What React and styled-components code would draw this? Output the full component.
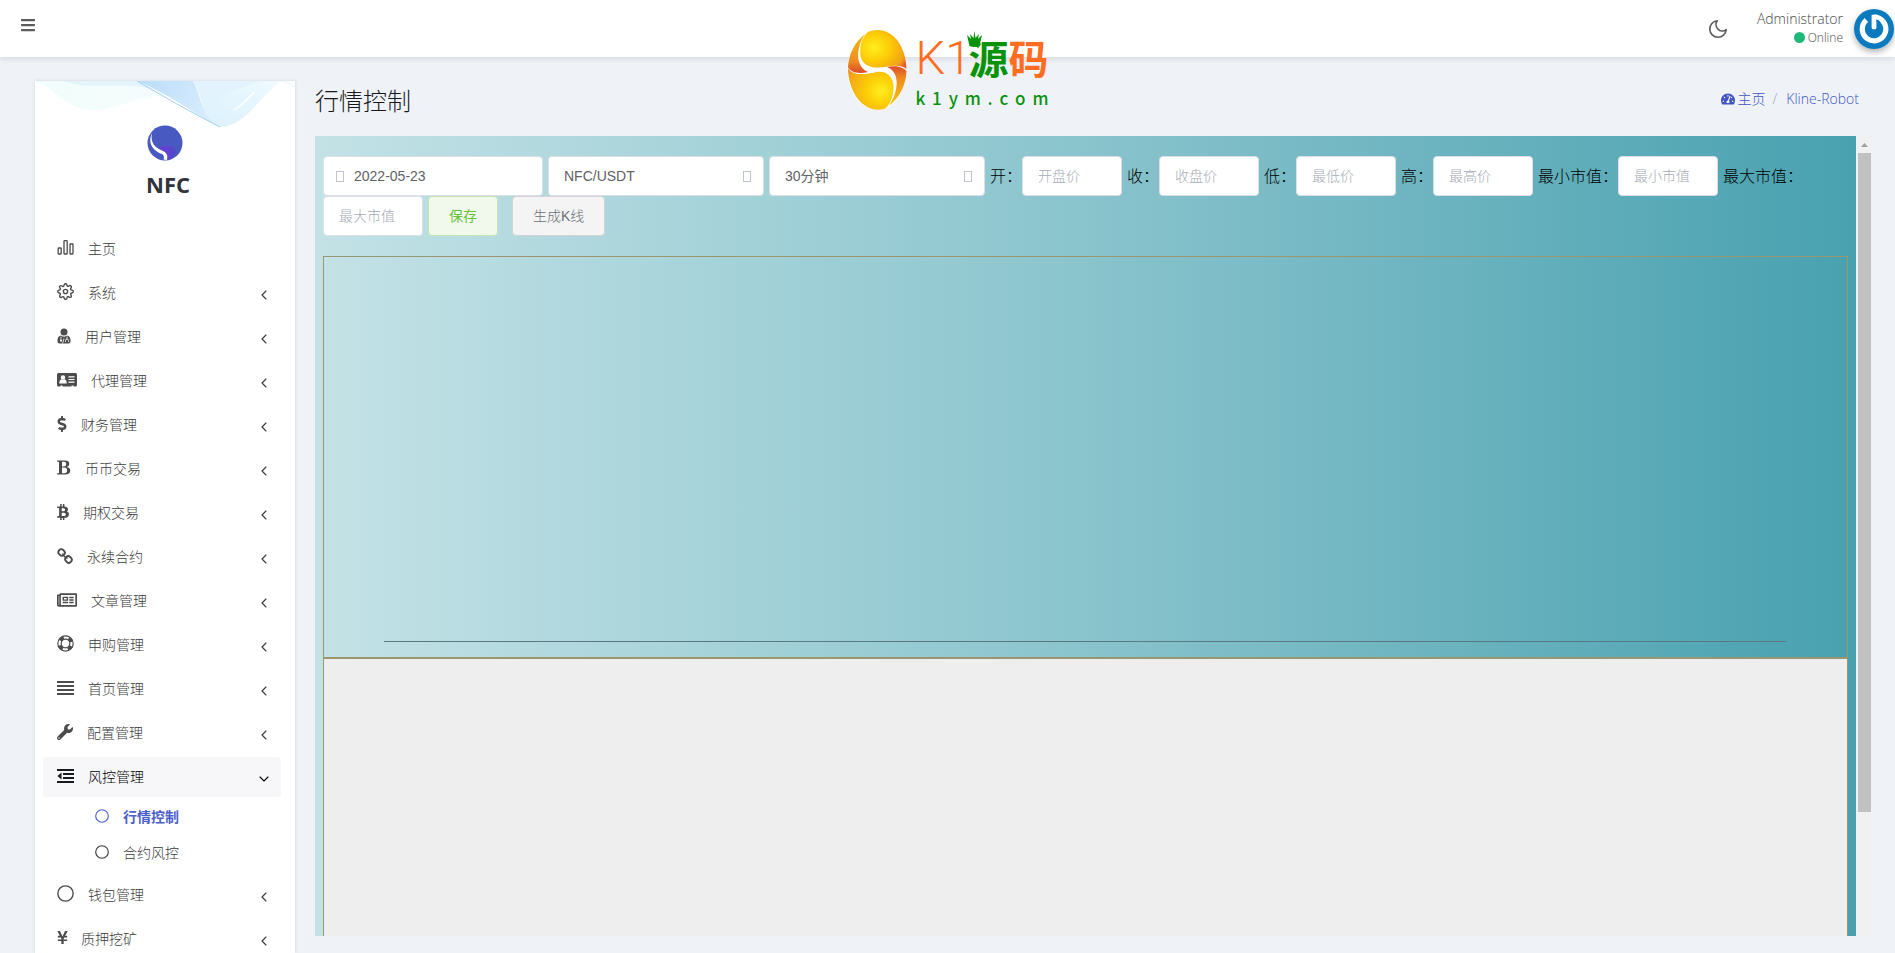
import React from "react";
import styled, { createGlobalStyle, css } from "styled-components";
import { FaBars, FaBtc, FaDollarSign, FaRegNewspaper, FaTachometerAlt, FaWrench, FaYenSign } from "react-icons/fa";
import { FiChevronDown, FiChevronLeft, FiMoon, FiSettings } from "react-icons/fi";

const latin = `"Open Sans", "Noto Sans CJK SC", sans-serif`;
const element = `"Liberation Sans", "Noto Sans CJK SC", sans-serif`;

const GlobalStyle = createGlobalStyle`
  *, *::before, *::after { box-sizing: border-box; }
  body {
    margin: 0;
    background: #eff3f8;
    color: #414750;
    font-family: ${latin};
    font-size: 14px;
    font-weight: 300;
  }
  a { color: inherit; text-decoration: none; }
  button, input, select { font: inherit; color: inherit; }
  ul, ol { margin: 0; padding: 0; list-style: none; }
  svg { display: block; flex: none; }
`;

const Shell = styled.div`
  position: relative;
  height: 100vh;
  display: flex;
  flex-direction: column;
  overflow: hidden;
`;

/* ---------- top bar ---------- */

const TopBar = styled.header`
  flex: none;
  height: 57px;
  display: flex;
  align-items: center;
  justify-content: space-between;
  padding: 0 1px 0 20px;
  background: #fff;
  box-shadow: 0 2px 5px rgba(60, 70, 90, 0.14);
`;

const IconButton = styled.button`
  display: flex;
  padding: 0;
  border: 0;
  background: none;
  color: #5c5c5c;
  cursor: pointer;
`;

const MenuButton = styled(IconButton)`
  margin-bottom: 7px;
`;

const UserArea = styled.div`
  display: flex;
  align-items: center;
`;

const UserText = styled.div`
  display: flex;
  flex-direction: column;
  align-items: flex-end;
  margin: 0 11px 2px 28px;
  color: #4a4a4a;
  font-size: 14px;
  line-height: 20px;
`;

const Status = styled.span`
  display: flex;
  align-items: center;
  gap: 3px;
  font-size: 12px;
  line-height: 18px;

  &::before {
    content: "";
    width: 11px;
    height: 11px;
    border-radius: 50%;
    background: #21b978;
  }
`;

const AvatarFrame = styled.span`
  display: flex;
  border-radius: 50%;
  box-shadow: 0 3px 6px rgba(0, 0, 0, 0.3);
`;

const Avatar = () => (
  <AvatarFrame>
    <svg width="40" height="40" viewBox="0 0 40 40" role="img" aria-label="Administrator">
      <circle cx="20" cy="20" r="20" fill="#0b7abf" />
      <path d="M20 8.200 A11.800 11.800 0 1 1 12.400 11" fill="none" stroke="#fff" strokeWidth="5.200" />
      <path d="M17.600 5.700 H22.400 V18.500 Q22.400 20.500 20 20.500 Q17.600 20.500 17.600 18.500 Z" fill="#fff" />
      <path d="M22.400 10.500 V12 Q25 12.500 27 14 L24.500 11 Z" fill="#0b7abf" />
    </svg>
  </AvatarFrame>
);

/* ---------- watermark ---------- */

const Watermark = styled.div`
  position: absolute;
  top: 29px;
  left: 50%;
  transform: translateX(-50%);
  display: flex;
  gap: 9px;
  pointer-events: none;
`;

const MarkText = styled.div`
  display: flex;
  flex-direction: column;
  width: 133px;
`;

const MarkTitle = styled.div`
  position: relative;
  display: flex;
  align-items: center;
  height: 57px;
  color: #ff6d20;
  font: 700 40px/57px "Noto Sans CJK SC", sans-serif;
`;

const MarkLatin = styled.span`
  width: 53px;
  font: 300 47px/57px Roboto, sans-serif;
`;

const Green = styled.span`
  color: #0a930a;
`;

const Crown = styled.svg`
  position: absolute;
  top: 2px;
  left: 50px;
`;

const MarkDomain = styled.div`
  display: flex;
  justify-content: space-between;
  color: #0a930a;
  font: 500 17px/24px "Noto Sans CJK SC", sans-serif;
`;

const Egg = () => (
  <svg width="60" height="82" viewBox="0 0 60 82" aria-hidden="true">
    <defs>
      <radialGradient id="eggTop" cx="0.3" cy="0.45" r="0.8">
        <stop offset="0" stopColor="#ffee20" />
        <stop offset="0.45" stopColor="#fccb05" />
        <stop offset="0.85" stopColor="#f3a018" />
        <stop offset="1" stopColor="#e0572a" />
      </radialGradient>
      <radialGradient id="eggBottom" cx="0.72" cy="0.55" r="0.85">
        <stop offset="0" stopColor="#ffee20" />
        <stop offset="0.4" stopColor="#fccb05" />
        <stop offset="0.85" stopColor="#f3a81a" />
        <stop offset="1" stopColor="#ee8a1c" />
      </radialGradient>
      <linearGradient id="eggEdge" x1="0" y1="0" x2="0" y2="1">
        <stop offset="0" stopColor="#f9bd12" />
        <stop offset="0.7" stopColor="#ee8c20" />
        <stop offset="1" stopColor="#dc4a2a" />
      </linearGradient>
      <linearGradient id="eggEdgeLow" x1="0" y1="1" x2="0" y2="0">
        <stop offset="0" stopColor="#fbc60c" />
        <stop offset="0.7" stopColor="#ee8c20" />
        <stop offset="1" stopColor="#dc4a2a" />
      </linearGradient>
    </defs>
    <ellipse cx="30" cy="41" rx="29.500" ry="40" fill="#fff" />
    <path d="M30 1 C48 1 59 19 59.500 40 C56 37 49 36 41 37.500 C29 40 16 39 13.500 27 C12 16 16 6 22 2.500 Q26 1 30 1Z" fill="url(#eggTop)" />
    <path d="M18 5 C8 13 2 24 1 38 C4 44 12 45 21 43 C10 38 7 23 18 5Z" fill="url(#eggEdge)" />
    <path d="M1 38.500 C3 46 17 46.500 29 43 C40 41 46 48 46.500 57 C47 68 42 78 37 80 C18 85 1 65 1 38.500Z" fill="url(#eggBottom)" />
    <path d="M42 77 C53 68 59 56 59.500 42 C56 37.500 48 36 40 38 C51 42 54 58 42 77Z" fill="url(#eggEdgeLow)" />
  </svg>
);

const Brandmark = () => (
  <Watermark>
    <Egg />
    <MarkText>
      <MarkTitle>
        <MarkLatin>K1</MarkLatin>
        <Green>源</Green>
        <span>码</span>
        <Crown width="17" height="17" viewBox="0 0 17 17" aria-hidden="true">
          <path d="M1 4 L5 8 L4 3 L7.500 7 L8.500 0 L9.500 7 L13 3 L12 8 L16 4 L13.500 15 Q8.500 17 3.500 15 Z" fill="#0a930a" />
        </Crown>
      </MarkTitle>
      <MarkDomain>
        {[..."k1ym.com"].map((letter, i) => (
          <span key={i}>{letter}</span>
        ))}
      </MarkDomain>
    </MarkText>
  </Watermark>
);

/* ---------- sidebar ---------- */

const Columns = styled.div`
  flex: 1;
  min-height: 0;
  display: flex;
  gap: 20px;
  padding: 24px 22px 0 35px;
`;

const Sidebar = styled.aside`
  flex: none;
  width: 260px;
  overflow: hidden;
  background: #fff;
  box-shadow: 0 0 4px rgba(60, 70, 90, 0.16);
`;

const Brand = styled.a`
  position: relative;
  display: flex;
  flex-direction: column;
  align-items: center;
  height: 148px;
  padding-top: 44px;
  color: #30343b;
  font-size: 22px;
  font-weight: 700;
  line-height: 30px;
`;

const BrandName = styled.span`
  margin: 8px 0 0 6px;
`;

const Waves = styled.svg`
  position: absolute;
  top: 0;
  left: 0;
`;

const BrandWaves = () => (
  <Waves width="260" height="48" viewBox="0 0 260 48" aria-hidden="true">
    <defs>
      <linearGradient id="wBlue" x1="0" y1="0" x2="1" y2="0.4">
        <stop offset="0" stopColor="#b9def8" />
        <stop offset="0.5" stopColor="#c9e4fb" />
        <stop offset="1" stopColor="#d8edfc" />
      </linearGradient>
      <linearGradient id="wMint" x1="0" y1="0" x2="1" y2="0">
        <stop offset="0" stopColor="#f0fdfb" />
        <stop offset="0.6" stopColor="#f4fdfc" />
        <stop offset="1" stopColor="#f4fbfd" />
      </linearGradient>
      <linearGradient id="wPale" x1="0" y1="1" x2="1" y2="0">
        <stop offset="0" stopColor="#d9f0fd" />
        <stop offset="1" stopColor="#effaff" />
      </linearGradient>
    </defs>
    <path d="M0 0 C22 8 30 28 58 29 C84 29 90 18 130 14 L102 0Z" fill="url(#wMint)" />
    <path d="M28 0 C56 10 84 0 118 8 L102 0Z" fill="#e3f5fa" />
    <path d="M102 0 H158 C166 14 166 34 185 46 C160 34 140 16 102 0Z" fill="url(#wBlue)" />
    <path d="M158 0 H247 C228 10 212 46 185 46 C168 38 168 16 158 0Z" fill="url(#wPale)" />
    <path d="M172 24 C190 10 206 8 224 0 H158 C164 8 168 16 172 24Z" fill="#e2f3fd" />
    <path d="M199 29 Q210 22 219 11" stroke="#fff" strokeWidth="1.500" fill="none" />
    <path d="M102 0 C140 22 150 28 185 46" stroke="#9fd0f2" strokeWidth="1" fill="none" />
    <path d="M247 0 Q255 2 260 6" stroke="#e8f6fd" fill="none" />
  </Waves>
);

const BrandLogo = () => (
  <svg width="36" height="36" viewBox="0 0 36 36" aria-hidden="true">
    <defs>
      <linearGradient id="nfcTail" x1="0" y1="0" x2="1" y2="0">
        <stop offset="0" stopColor="#6a3fd6" />
        <stop offset="1" stopColor="#5546c8" />
      </linearGradient>
    </defs>
    <circle cx="18" cy="18" r="17.500" fill="#4959c2" />
    <path d="M12 22 Q27 19 28.500 25 Q29 31 21 35 Q19 30 12 22Z" fill="url(#nfcTail)" />
    <path d="M5 8 C0 19 7 26 15 29 Q18 31 16.500 34.500 L20 35 Q21.500 29 17 26.500 C8 23 3 18 5 8Z" fill="#fff" />
  </svg>
);

const Nav = styled.nav`
  padding: 0 14px 0 8px;
`;

const NavEntry = styled.li`
  margin-bottom: 4px;
`;

const NavLink = styled.a`
  display: flex;
  align-items: center;
  height: 40px;
  padding: 0 9px 0 14px;
  border-radius: 3px;
  color: ${(p) => (p.$open ? "#000" : "#3a3a3a")};
  background: ${(p) => (p.$open ? "#f7f7f9" : "transparent")};
`;

const NavIcon = styled.span`
  display: flex;
  justify-content: center;
  width: ${(p) => p.$width}px;
  margin: 0 14px 3px 0;
  color: ${(p) => (p.$open ? "#16181b" : "#4c4c4c")};
`;

const NavText = styled.span`
  flex: 1;
  line-height: 20px;
`;

const Chevron = styled.span`
  display: flex;
  margin-top: 3px;
`;

const SubNav = styled.ul`
  padding-top: 2px;
`;

const SubLink = styled.a`
  display: flex;
  align-items: center;
  gap: 14px;
  height: 36px;
  padding: 0 0 2px 52px;
  color: ${(p) => (p.$active ? "#4c5fcb" : "#3a3a3a")};
  font-weight: ${(p) => (p.$active ? 700 : 300)};
`;

const Ring = ({ size }) => (
  <svg width={size} height={size} viewBox="0 0 16 16" aria-hidden="true">
    <circle cx="8" cy="8" r="7.200" fill="none" stroke="currentColor" strokeWidth="1.300" />
  </svg>
);

const BarsIcon = () => (
  <svg width="17" height="17" viewBox="0 0 17 17" fill="none" stroke="currentColor" strokeWidth="1.300" aria-hidden="true">
    <rect x="1.200" y="9" width="3" height="6" rx="0.500" />
    <rect x="7" y="1.700" width="3.200" height="13.300" rx="0.500" />
    <rect x="13" y="5" width="3" height="10" rx="0.500" />
  </svg>
);

const DoctorIcon = () => (
  <svg width="14" height="16" viewBox="0 0 14 16" fill="currentColor" aria-hidden="true">
    <circle cx="7" cy="4" r="3.500" />
    <path d="M3.500 7.500 Q7 9.800 10.500 7.500 Q13.500 8.300 13.600 13 Q13.600 15.500 11.500 15.500 H2.500 Q0.400 15.500 0.400 13 Q0.500 8.300 3.500 7.500Z" />
    <path d="M4 8.500 V11.500 M10 8.500 V11 M8.500 14 V12.500 Q8.500 11 10 11 Q11.500 11 11.500 12.500 V14 M5.500 15.500 L7 10.500" stroke="#fff" strokeWidth="0.800" fill="none" />
    <circle cx="4" cy="12.600" r="1.100" fill="#fff" />
  </svg>
);

const CardIcon = () => (
  <svg width="20" height="16" viewBox="0 0 20 16" aria-hidden="true">
    <path d="M1.500 1 H18.500 Q20 1 20 2.500 V13 Q20 14.500 18.500 14.500 H16.500 V13.500 H14.500 V14.500 H5.500 V13.500 H3.500 V14.500 H1.500 Q0 14.500 0 13 V2.500 Q0 1 1.500 1Z" fill="currentColor" />
    <circle cx="6" cy="5.500" r="2.200" fill="#fff" />
    <path d="M2.300 11.500 Q2.300 7.500 4.500 7.200 Q6 8.400 7.500 7.200 Q9.700 7.500 9.700 11.500Z" fill="#fff" />
    <path d="M11.500 4.800 H17.500 M11.500 7.500 H17.500 M11.500 10.200 H17.500" stroke="#fff" strokeWidth="1.200" />
  </svg>
);

/* Slab-serif bold mark: outer bowl shape with two counters cut out. */
const BoldIcon = () => (
  <svg width="14" height="15" viewBox="0 0 14 15" fill="currentColor" fillRule="evenodd" aria-hidden="true">
    <path d="M0 0.500 H8 Q12.300 0.500 12.300 3.900 Q12.300 6.300 9.600 7 Q13.300 7.600 13.300 10.600 Q13.300 14.500 8 14.500 H0 V13.500 L2 13 V2 L0 1.500Z M5 1.700 V6.400 H7 Q9.300 6.400 9.300 4 Q9.300 1.700 7 1.700Z M5 7.600 V13.300 H7.300 Q10.100 13.300 10.100 10.500 Q10.100 7.600 7.300 7.600Z" />
  </svg>
);

const ChainIcon = () => (
  <svg width="16" height="16" viewBox="0 0 16 16" fill="none" stroke="currentColor" strokeWidth="1.900" aria-hidden="true">
    <rect x="1.200" y="1.500" width="6.600" height="5.800" rx="2.700" transform="rotate(45 4.500 4.500)" />
    <rect x="8.200" y="8.600" width="6.600" height="5.800" rx="2.700" transform="rotate(45 11.500 11.500)" />
    <path d="M5.500 5.500 Q6.500 8.500 10.500 10.500" strokeWidth="1.400" />
  </svg>
);

const NewsIcon = styled(FaRegNewspaper)`
  width: 20px;
  height: 18px;
`;

const LifeRingIcon = () => (
  <svg width="17" height="17" viewBox="0 0 17 17" fill="none" stroke="currentColor" aria-hidden="true">
    <circle cx="8.500" cy="8.500" r="7.700" strokeWidth="1.200" />
    <circle cx="8.500" cy="8.500" r="4.300" strokeWidth="1.200" />
    <circle cx="8.500" cy="8.500" r="6" strokeWidth="3.600" strokeDasharray="4.400 5.025" strokeDashoffset="-2.500" />
  </svg>
);

const JustifyIcon = () => (
  <svg width="17" height="15" viewBox="0 0 17 15" fill="currentColor" aria-hidden="true">
    <path d="M0 1h17v2H0zM0 5h17v2H0zM0 9h17v2H0zM0 13h17v2H0z" />
  </svg>
);

const OutdentIcon = () => (
  <svg width="17" height="15" viewBox="0 0 17 15" fill="currentColor" aria-hidden="true">
    <path d="M0 1h17v2H0zM6 5h11v2H6zM6 9h11v2H6zM0 13h17v2H0zM4.500 4.500v7L0.500 8z" />
  </svg>
);

const menu = [
  { text: "主页", icon: <BarsIcon />, width: 17, leaf: true },
  { text: "系统", icon: <FiSettings size={17} />, width: 17 },
  { text: "用户管理", icon: <DoctorIcon />, width: 14 },
  { text: "代理管理", icon: <CardIcon />, width: 20 },
  { text: "财务管理", icon: <FaDollarSign size={16} />, width: 10 },
  { text: "币币交易", icon: <BoldIcon />, width: 14 },
  { text: "期权交易", icon: <FaBtc size={16} />, width: 12 },
  { text: "永续合约", icon: <ChainIcon />, width: 16 },
  { text: "文章管理", icon: <NewsIcon />, width: 20 },
  { text: "申购管理", icon: <LifeRingIcon />, width: 17 },
  { text: "首页管理", icon: <JustifyIcon />, width: 17 },
  { text: "配置管理", icon: <FaWrench size={16} />, width: 16 },
  {
    text: "风控管理",
    icon: <OutdentIcon />,
    width: 17,
    children: [{ text: "行情控制", active: true }, { text: "合约风控" }],
  },
  { text: "钱包管理", icon: <Ring size={17} />, width: 17 },
  { text: "质押挖矿", icon: <FaYenSign size={15} />, width: 10 },
];

const Menu = () => (
  <Nav>
    <ul>
      {menu.map((item) => (
        <NavEntry key={item.text}>
          <NavLink href="#" $open={!!item.children}>
            <NavIcon $width={item.width} $open={!!item.children}>{item.icon}</NavIcon>
            <NavText>{item.text}</NavText>
            {!item.leaf && (
              <Chevron>
                {item.children ? <FiChevronDown size={16} strokeWidth={1.7} /> : <FiChevronLeft size={16} strokeWidth={1.7} />}
              </Chevron>
            )}
          </NavLink>
          {item.children && (
            <SubNav>
              {item.children.map((sub) => (
                <li key={sub.text}>
                  <SubLink href="#" $active={sub.active}>
                    <Ring size={14} />
                    {sub.text}
                  </SubLink>
                </li>
              ))}
            </SubNav>
          )}
        </NavEntry>
      ))}
    </ul>
  </Nav>
);

/* ---------- content ---------- */

const Content = styled.main`
  flex: 1;
  min-width: 0;
  display: flex;
  flex-direction: column;
  padding-bottom: 17px;
`;

const TitleRow = styled.div`
  flex: none;
  display: flex;
  align-items: center;
  justify-content: space-between;
  height: 55px;
  padding: 0 14px 15px 0;
`;

const Title = styled.h1`
  margin: 0;
  color: #16191c;
  font-size: 24px;
  font-weight: 300;
  line-height: 32px;
`;

const Crumbs = styled.ol`
  display: flex;
  align-items: center;
  margin-bottom: 4px;
  color: #4253c4;
  line-height: 20px;

  a {
    display: flex;
    align-items: center;
    gap: 3px;
  }

  li + li::before {
    content: "/";
    margin: 0 9px 0 7px;
    color: #a0a6b0;
  }

  li {
    display: flex;
  }
`;

const Panel = styled.section`
  flex: 1;
  min-height: 0;
  display: flex;
`;

const sea = "linear-gradient(90deg, #c3e2e6, #8cc5ce 48%, #49a1b0)";

const PanelBody = styled.div`
  flex: 1;
  min-width: 0;
  display: flex;
  flex-direction: column;
  padding: 20px 8px 0;
  background: ${sea};
  color: #000;
  font: 300 16px/38px "Noto Sans CJK SC", sans-serif;
`;

const Filters = styled.form`
  flex: none;
  display: flex;
  flex-wrap: wrap;
  margin-bottom: 20px;
`;

const control = css`
  height: 40px;
  margin-right: 5px;
  border: 1px solid #dcdfe6;
  border-radius: 4px;
  background: #fff;
  color: #606266;
  font: 400 14px/20px ${element};
`;

const Field = styled.span`
  ${control}
  display: flex;
  align-items: center;
  width: ${(p) => p.$width}px;
  padding: ${(p) => (p.$leading ? "0 12px 0 12px" : "0 12px 0 15px")};
  gap: ${(p) => (p.$leading ? "10px" : "0")};

  input, select {
    flex: 1;
    min-width: 0;
    padding: 0;
    border: 0;
    outline: 0;
    background: none;
    appearance: none;
  }
`;

const Glyph = styled.span`
  width: 8px;
  height: 11px;
  border: 1px solid #c0c4cc;
`;

const PriceInput = styled.input`
  ${control}
  width: 100px;
  padding: 0 14px 0 15px;
  font-weight: 300;

  &::placeholder {
    color: #a6abb5;
    opacity: 1;
  }
`;

const ActionButton = styled.button`
  ${control}
  margin-right: 14px;
  padding: 0 20px;
  font-weight: 300;
  cursor: pointer;
  ${(p) =>
    p.$tone === "success"
      ? "color: #67c23a; background: #f0f9eb; border-color: #c2e7b0; font-weight: 400;"
      : "color: #6c6f75; background: #f4f4f5; border-color: #d3d4d6;"}
`;

const Chart = styled.div`
  flex: none;
  display: flex;
  align-items: flex-end;
  height: 402px;
  padding: 0 61px 15px 60px;
  border: 1px solid #9a966f;
  background: ${sea};
`;

const Axis = styled.div`
  flex: 1;
  height: 1px;
  background: #5b7880;
`;

const Volume = styled.div`
  flex: 1;
  border: 1px solid #9a966f;
  border-bottom: 0;
  background: #eee;
`;

const ScrollTrack = styled.div`
  flex: none;
  width: 17px;
  padding: 0 2px;
  display: flex;
  flex-direction: column;
  align-items: stretch;
  background: #f1f1f1;
`;

const ScrollArrow = styled.span`
  flex: none;
  display: flex;
  align-items: center;
  justify-content: center;
  height: 17px;
  color: #a0a0a0;
`;

const ScrollLane = styled.div`
  flex: 1;
`;

const ScrollThumb = styled.div`
  height: 86%;
  background: #c1c1c1;
`;

const prices = [
  { id: "open", label: "开：", hint: "开盘价" },
  { id: "close", label: "收：", hint: "收盘价" },
  { id: "low", label: "低：", hint: "最低价" },
  { id: "high", label: "高：", hint: "最高价" },
  { id: "min", label: "最小市值：", hint: "最小市值" },
  { id: "max", label: "最大市值：", hint: "最大市值" },
];

export default function App() {
  return (
    <>
      <GlobalStyle />
      <Shell>
        <TopBar>
          <MenuButton type="button" aria-label="Menu">
            <FaBars size={16} />
          </MenuButton>
          <UserArea>
            <IconButton type="button" aria-label="Dark mode">
              <FiMoon size={22} strokeWidth={1.8} />
            </IconButton>
            <UserText>
              <span>Administrator</span>
              <Status>Online</Status>
            </UserText>
            <Avatar />
          </UserArea>
        </TopBar>

        <Columns>
          <Sidebar>
            <Brand href="#">
              <BrandWaves />
              <BrandLogo />
              <BrandName>NFC</BrandName>
            </Brand>
            <Menu />
          </Sidebar>

          <Content>
            <TitleRow>
              <Title>行情控制</Title>
              <Crumbs>
                <li>
                  <a href="#">
                    <FaTachometerAlt size={14} />
                    主页
                  </a>
                </li>
                <li>
                  <a href="#">Kline-Robot</a>
                </li>
              </Crumbs>
            </TitleRow>

            <Panel>
              <PanelBody>
                <Filters onSubmit={(e) => e.preventDefault()}>
                  <Field $width={220} $leading>
                    <Glyph />
                    <input aria-label="日期" defaultValue="2022-05-23" />
                  </Field>
                  <Field $width={216}>
                    <select aria-label="交易对" defaultValue="NFC/USDT">
                      <option>NFC/USDT</option>
                    </select>
                    <Glyph />
                  </Field>
                  <Field $width={216}>
                    <select aria-label="周期" defaultValue="30分钟">
                      <option>30分钟</option>
                    </select>
                    <Glyph />
                  </Field>
                  {prices.map((p) => (
                    <React.Fragment key={p.id}>
                      <label htmlFor={p.id}>{p.label}</label>
                      <PriceInput id={p.id} placeholder={p.hint} />
                    </React.Fragment>
                  ))}
                  <ActionButton type="submit" $tone="success">保存</ActionButton>
                  <ActionButton type="button">生成K线</ActionButton>
                </Filters>
                <Chart>
                  <Axis />
                </Chart>
                <Volume />
              </PanelBody>
              <ScrollTrack>
                <ScrollArrow>
                  <svg width="7" height="4" viewBox="0 0 7 4" aria-hidden="true">
                    <path d="M0 4 L3.500 0 L7 4Z" fill="currentColor" />
                  </svg>
                </ScrollArrow>
                <ScrollLane>
                  <ScrollThumb />
                </ScrollLane>
                <ScrollArrow />
              </ScrollTrack>
            </Panel>
          </Content>
        </Columns>

        <Brandmark />
      </Shell>
    </>
  );
}
